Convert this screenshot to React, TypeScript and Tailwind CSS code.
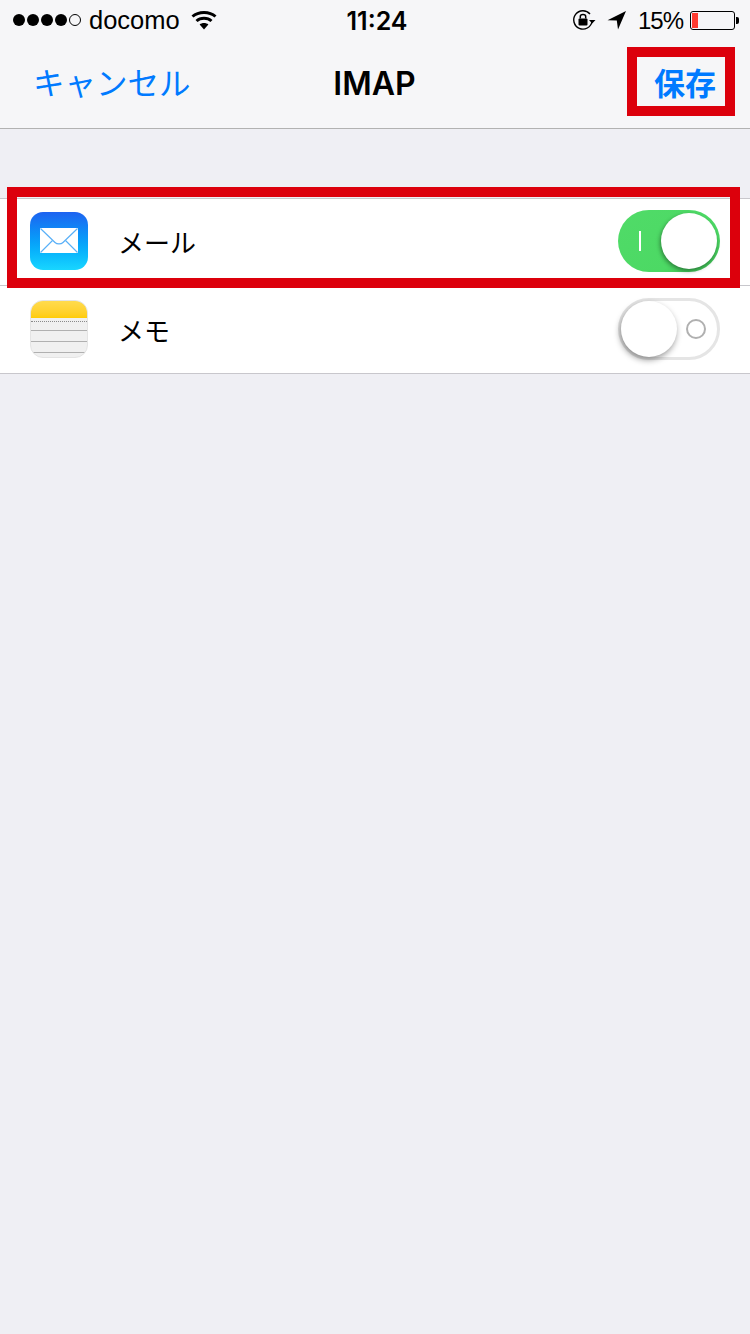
const cjk = "font-['Noto_Sans_CJK_JP','Noto_Sans_CJK_SC',sans-serif]";

function SignalDots() {
  return (
    <div className="flex items-center gap-[2px]">
      {[0, 1, 2, 3].map((i) => (
        <span key={i} className="w-[12px] h-[12px] rounded-full bg-black" />
      ))}
      <span className="w-[12px] h-[12px] rounded-full border border-black" />
    </div>
  );
}

function WifiIcon() {
  return (
    <svg width="26" height="20" viewBox="0 0 26 20" fill="none" stroke="#000" strokeWidth="3">
      <path d="M1.5 6.5 C7.5 1 18.5 1 24.5 6.5" />
      <path d="M5.5 11 C9.5 7.4 16.5 7.4 20.5 11" />
      <path d="M13 19.5 L8.6 14.6 C11 12.6 15 12.6 17.4 14.6 Z" fill="#000" stroke="none" />
    </svg>
  );
}

function RotationLockIcon() {
  return (
    <svg width="24" height="22" viewBox="0 0 24 22" fill="none">
      <path d="M20 12.5 A9.2 9.2 0 1 1 18 5" stroke="#000" strokeWidth="1.4" />
      <path d="M17 11 L23.5 11 L20.2 14.6 Z" fill="#000" />
      <rect x="6.5" y="9.5" width="9" height="7" rx="1" fill="#000" />
      <path d="M8.3 9.5 V7.6 C8.3 4.8 13.7 4.8 13.7 7.6 V9.5" stroke="#000" strokeWidth="1.5" />
    </svg>
  );
}

function LocationIcon() {
  return (
    <svg width="20" height="20" viewBox="0 0 20 20">
      <path d="M19 1 L0.5 10.2 L9.8 10.4 L11 19.5 Z" fill="#000" />
    </svg>
  );
}

function BatteryIcon() {
  return (
    <div className="flex items-center">
      <div className="w-[45px] h-[19px] rounded-[3px] border border-black py-[1px] pl-[1px] flex">
        <div className="w-[6px] bg-[#ff3b30]" />
      </div>
      <div className="w-[3px] h-[7px] bg-black rounded-r-[2px] ml-[1px]" />
    </div>
  );
}

function MailIcon() {
  return (
    <div className="w-[58px] h-[58px] rounded-[13px] bg-gradient-to-b from-[#1d62f0] to-[#19d6ff] flex items-center justify-center">
      <svg width="38" height="25" viewBox="0 0 38 25">
        <rect width="38" height="25" fill="#fff" />
        <path d="M0.5 0.5 L15 14.5 C17 16.4 21 16.4 23 14.5 L37.5 0.5" fill="none" stroke="#59b0f8" strokeWidth="1.2" />
        <path d="M0.5 24.5 L12.5 12.5 M37.5 24.5 L25.5 12.5" fill="none" stroke="#59b0f8" strokeWidth="1.2" />
      </svg>
    </div>
  );
}

function NotesIcon() {
  return (
    <div className="w-[58px] h-[58px] rounded-[13px] overflow-hidden bg-[#f0f0f0] border border-[#e4e4e4] flex flex-col">
      <div className="h-[17px] shrink-0 bg-gradient-to-b from-[#ffdb4d] to-[#ffcc02]" />
      <div className="h-[4px] shrink-0 border-b border-dotted border-[#8a8a8a]" />
      <div className="h-[9px] shrink-0 border-b border-[#b0b0b0]" />
      <div className="h-[11px] shrink-0 border-b border-[#b0b0b0]" />
      <div className="h-[11px] shrink-0 border-b border-[#b0b0b0]" />
    </div>
  );
}

function Toggle({ on }: { on: boolean }) {
  if (on) {
    return (
      <div className="relative w-[102px] h-[62px] rounded-full bg-gradient-to-br from-[#50db68] via-[#4cd964] via-70% to-[#3cb852] flex items-center">
        <span className="ml-[21px] w-[2px] h-[20px] bg-white" />
        <span className="absolute right-[3px] top-[3px] w-[56px] h-[56px] rounded-full bg-white shadow-[-1px_2px_4px_rgba(0,0,0,0.4)]" />
      </div>
    );
  }
  return (
    <div className="relative w-[102px] h-[62px] rounded-full border-[3px] border-[#e5e5e5] bg-white flex items-center justify-end">
      <span className="mr-[11px] w-[20px] h-[20px] rounded-full border-[2px] border-[#b0b0b0]" />
      <span className="absolute left-[0px] top-[0px] w-[56px] h-[56px] rounded-full bg-white shadow-[-1px_3px_6px_rgba(0,0,0,0.4)]" />
    </div>
  );
}

function Row({ icon, label, on, className, labelClass }: { icon: React.ReactNode; label: string; on: boolean; className: string; labelClass: string }) {
  return (
    <div className={`flex items-center pl-[30px] pr-[30px] bg-white border-b border-[#c8c7cc] ${className}`}>
      {icon}
      <span className={`ml-[30px] text-[26px] text-black ${cjk} ${labelClass}`}>{label}</span>
      <div className="ml-auto">
        <Toggle on={on} />
      </div>
    </div>
  );
}

export default function App() {
  return (
    <div className="relative w-[750px] h-[1334px] bg-[#efeff4] overflow-hidden font-['Liberation_Sans',sans-serif]">
      {/* header */}
      <div className="h-[129px] bg-[#f6f6f8] border-b border-[#b2b2b2]">
        <div className="h-[40px] grid grid-cols-[1fr_auto_1fr] items-center pl-[13px] pr-[11px] text-black">
          <div className="flex items-center">
            <SignalDots />
            <span className="ml-[8px] mt-[2px] text-[25.5px] leading-none">docomo</span>
            <span className="ml-[11px]">
              <WifiIcon />
            </span>
          </div>
          <span className="pl-[2px] mt-[2px] text-[25px] font-semibold leading-none font-['Inter',sans-serif]">11:24</span>
          <div className="flex items-center justify-end">
            <RotationLockIcon />
            <span className="ml-[11px]">
              <LocationIcon />
            </span>
            <span className="ml-[11px] mt-[2px] text-[24px] tracking-[-1px] leading-none">15%</span>
            <span className="ml-[7px]">
              <BatteryIcon />
            </span>
          </div>
        </div>
        <div className="h-[88px] grid grid-cols-[1fr_auto_1fr] items-center pl-[33px] pr-[34px]">
          <span className={`text-[31.5px] leading-none text-[#007aff] -mt-[4px] ${cjk}`}>キャンセル</span>
          <span className="text-[32px] font-semibold leading-none text-black -mt-[1px] font-['Inter',sans-serif]">IMAP</span>
          <span className={`justify-self-end text-[31px] font-bold leading-none text-[#007aff] -mt-[5px] ${cjk}`}>保存</span>
        </div>
      </div>

      {/* rows */}
      <div className="mt-[69px] border-t border-[#c8c7cc]">
        <Row className="h-[87px] pb-[3px]" labelClass="mt-[2px]" icon={<MailIcon />} label="メール" on />
        <Row className="h-[88px] pb-[1px]" labelClass="" icon={<NotesIcon />} label="メモ" on={false} />
      </div>

      {/* red highlights */}
      <div className="absolute left-[627px] top-[47px] w-[108px] h-[69px] border-[10px] border-[#dc000c]" />
      <div className="absolute left-[7px] top-[187px] w-[733px] h-[101px] border-[10px] border-[#dc000c]" />
    </div>
  );
}
